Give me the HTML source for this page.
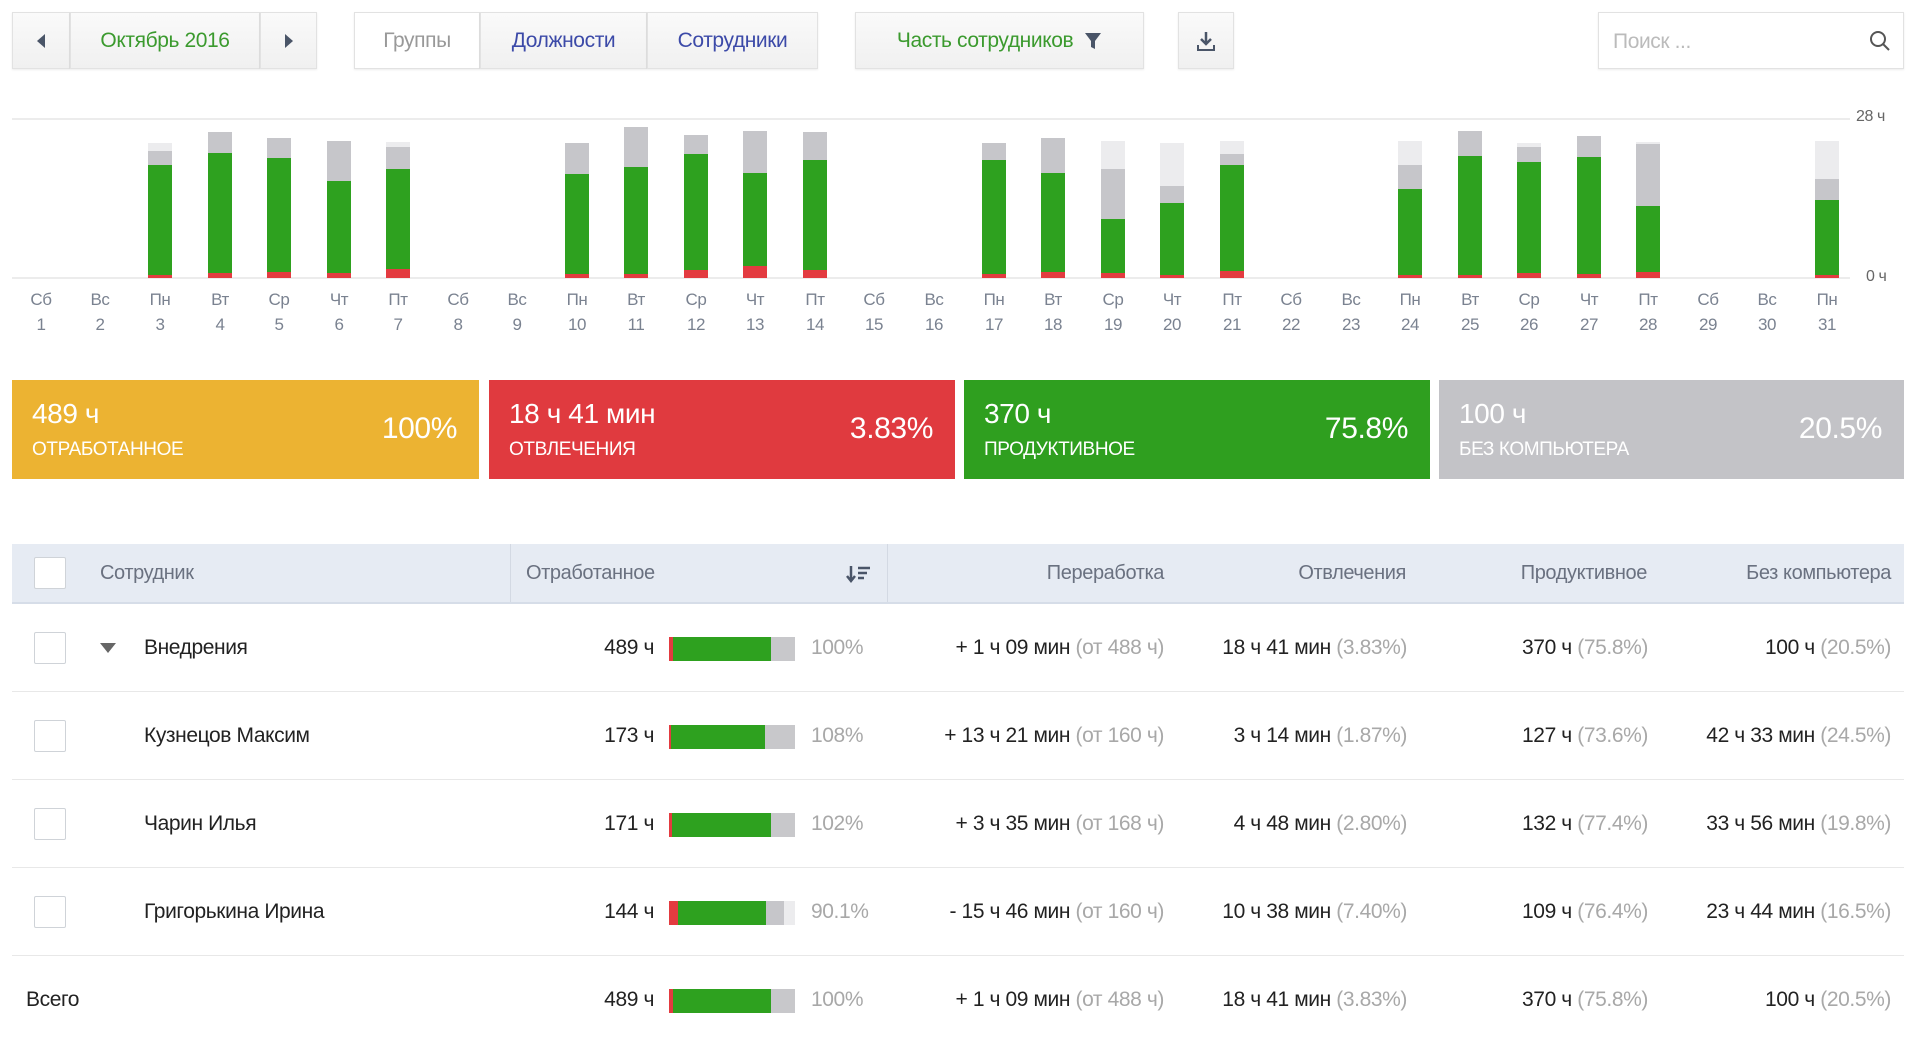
<!DOCTYPE html>
<html><head><meta charset="utf-8"><style>
*{box-sizing:border-box;margin:0;padding:0}
body{width:1920px;height:1034px;background:#fff;font-family:"Liberation Sans",sans-serif;color:#333;position:relative;overflow:hidden;letter-spacing:-0.4px}
.a{position:absolute}
.btn{position:absolute;top:12px;height:57px;background:linear-gradient(#fafafa,#f0f0f0);border:1px solid #e2e2e2;box-shadow:0 1px 2px rgba(0,0,0,.08);display:flex;align-items:center;justify-content:center;font-size:21px}
.bar{position:absolute;width:24px;bottom:756px}
.bar div{position:absolute;left:0;right:0;bottom:0}
.lt{background:#ececee}.gr{background:#c6c6ca}.gn{background:#2ea11f}.rd{background:#e33b40}
.dl{position:absolute;width:50px;text-align:center;font-size:17px;color:#7a8290;line-height:25px}
.card{position:absolute;top:380px;height:99px;color:#fff}
.card .v{position:absolute;left:20px;top:18px;font-size:28px}
.card .t{position:absolute;left:20px;top:59px;font-size:19px}
.card .p{position:absolute;right:22px;top:32px;font-size:30px}
.hd{position:absolute;top:544px;left:12px;width:1892px;height:60px;background:#e6ebf3;border-bottom:2px solid #d6dde8;font-size:20px;color:#6a7180}
.hd span{position:absolute;top:18px}
.cb{position:absolute;width:32px;height:32px;border:1px solid #cfd3d8;background:#fff;border-radius:2px}
.row{position:absolute;left:12px;width:1892px;height:88px;border-bottom:1px solid #e8e8e8;font-size:21px;color:#222}
.row span{position:absolute;top:32px;white-space:nowrap}
.g{color:#a8a8a8}
.pb{position:absolute;left:657px;top:33px;width:126px;height:24px;background:#c8c8cb}
.pb i{position:absolute;top:0;bottom:0;left:0}
</style></head><body>

<div class="btn" style="left:12px;width:58px;color:#555"><svg width="12" height="16"><path d="M10 1L2 8l8 7z" fill="#4a5568"/></svg></div>
<div class="btn" style="left:70px;width:190px;color:#3b9a2e">Октябрь 2016</div>
<div class="btn" style="left:260px;width:57px"><svg width="12" height="16"><path d="M2 1l8 7-8 7z" fill="#4a5568"/></svg></div>

<div class="btn" style="left:354px;width:126px;background:#fff;color:#999">Группы</div>
<div class="btn" style="left:480px;width:167px;color:#3c4aa8">Должности</div>
<div class="btn" style="left:647px;width:171px;color:#3c4aa8">Сотрудники</div>

<div class="btn" style="left:855px;width:289px;color:#3b9a2e">Часть сотрудников&nbsp;&nbsp;<svg width="18" height="18"><path d="M1 1h16l-6 8v8l-4-2V9z" fill="#4a5568"/></svg></div>
<div class="btn" style="left:1178px;width:56px"><svg width="20" height="22"><path d="M10 2v11M5 9l5 5 5-5" stroke="#4a5568" stroke-width="2.5" fill="none"/><path d="M2 15v5h16v-5" stroke="#4a5568" stroke-width="2" fill="none"/></svg></div>

<div class="a" style="left:1598px;top:12px;width:306px;height:57px;border:1px solid #e2e2e2;box-shadow:0 1px 2px rgba(0,0,0,.08);font-size:21px;color:#bbb;padding:17px 14px">Поиск ...
<svg class="a" style="right:12px;top:17px" width="22" height="22"><circle cx="9" cy="9" r="7" stroke="#555" stroke-width="2" fill="none"/><path d="M14 14l6 6" stroke="#555" stroke-width="2"/></svg></div>

<div class="a" style="left:12px;top:118px;width:1838px;height:2px;background:#ececec"></div>
<div class="a" style="left:12px;top:277px;width:1838px;height:2px;background:#ececec"></div>
<div class="a" style="left:1856px;top:108px;font-size:16px;color:#666">28 ч</div>
<div class="a" style="left:1866px;top:268px;font-size:16px;color:#666">0 ч</div>

<!-- bars -->
<div class="bar" style="left:148px"><div class="lt" style="height:135px"></div><div class="gr" style="height:127px"></div><div class="gn" style="height:113px"></div><div class="rd" style="height:3px"></div></div>
<div class="bar" style="left:208px"><div class="gr" style="height:146px"></div><div class="gn" style="height:125px"></div><div class="rd" style="height:5px"></div></div>
<div class="bar" style="left:267px"><div class="gr" style="height:140px"></div><div class="gn" style="height:120px"></div><div class="rd" style="height:6px"></div></div>
<div class="bar" style="left:327px"><div class="gr" style="height:137px"></div><div class="gn" style="height:97px"></div><div class="rd" style="height:5px"></div></div>
<div class="bar" style="left:386px"><div class="lt" style="height:136px"></div><div class="gr" style="height:131px"></div><div class="gn" style="height:109px"></div><div class="rd" style="height:9px"></div></div>
<div class="bar" style="left:565px"><div class="gr" style="height:135px"></div><div class="gn" style="height:104px"></div><div class="rd" style="height:4px"></div></div>
<div class="bar" style="left:624px"><div class="gr" style="height:151px"></div><div class="gn" style="height:111px"></div><div class="rd" style="height:4px"></div></div>
<div class="bar" style="left:684px"><div class="gr" style="height:143px"></div><div class="gn" style="height:124px"></div><div class="rd" style="height:8px"></div></div>
<div class="bar" style="left:743px"><div class="gr" style="height:147px"></div><div class="gn" style="height:105px"></div><div class="rd" style="height:12px"></div></div>
<div class="bar" style="left:803px"><div class="gr" style="height:146px"></div><div class="gn" style="height:118px"></div><div class="rd" style="height:8px"></div></div>
<div class="bar" style="left:982px"><div class="gr" style="height:135px"></div><div class="gn" style="height:118px"></div><div class="rd" style="height:4px"></div></div>
<div class="bar" style="left:1041px"><div class="gr" style="height:140px"></div><div class="gn" style="height:105px"></div><div class="rd" style="height:6px"></div></div>
<div class="bar" style="left:1101px"><div class="lt" style="height:137px"></div><div class="gr" style="height:109px"></div><div class="gn" style="height:59px"></div><div class="rd" style="height:5px"></div></div>
<div class="bar" style="left:1160px"><div class="lt" style="height:135px"></div><div class="gr" style="height:92px"></div><div class="gn" style="height:75px"></div><div class="rd" style="height:3px"></div></div>
<div class="bar" style="left:1220px"><div class="lt" style="height:137px"></div><div class="gr" style="height:124px"></div><div class="gn" style="height:113px"></div><div class="rd" style="height:7px"></div></div>
<div class="bar" style="left:1398px"><div class="lt" style="height:137px"></div><div class="gr" style="height:113px"></div><div class="gn" style="height:89px"></div><div class="rd" style="height:3px"></div></div>
<div class="bar" style="left:1458px"><div class="gr" style="height:147px"></div><div class="gn" style="height:122px"></div><div class="rd" style="height:3px"></div></div>
<div class="bar" style="left:1517px"><div class="lt" style="height:135px"></div><div class="gr" style="height:131px"></div><div class="gn" style="height:116px"></div><div class="rd" style="height:5px"></div></div>
<div class="bar" style="left:1577px"><div class="gr" style="height:142px"></div><div class="gn" style="height:121px"></div><div class="rd" style="height:4px"></div></div>
<div class="bar" style="left:1636px"><div class="lt" style="height:136px"></div><div class="gr" style="height:134px"></div><div class="gn" style="height:72px"></div><div class="rd" style="height:6px"></div></div>
<div class="bar" style="left:1815px"><div class="lt" style="height:137px"></div><div class="gr" style="height:99px"></div><div class="gn" style="height:78px"></div><div class="rd" style="height:3px"></div></div>

<!-- day labels -->
<div class="dl" style="left:16px;top:287px">Сб<br>1</div>
<div class="dl" style="left:75px;top:287px">Вс<br>2</div>
<div class="dl" style="left:135px;top:287px">Пн<br>3</div>
<div class="dl" style="left:195px;top:287px">Вт<br>4</div>
<div class="dl" style="left:254px;top:287px">Ср<br>5</div>
<div class="dl" style="left:314px;top:287px">Чт<br>6</div>
<div class="dl" style="left:373px;top:287px">Пт<br>7</div>
<div class="dl" style="left:433px;top:287px">Сб<br>8</div>
<div class="dl" style="left:492px;top:287px">Вс<br>9</div>
<div class="dl" style="left:552px;top:287px">Пн<br>10</div>
<div class="dl" style="left:611px;top:287px">Вт<br>11</div>
<div class="dl" style="left:671px;top:287px">Ср<br>12</div>
<div class="dl" style="left:730px;top:287px">Чт<br>13</div>
<div class="dl" style="left:790px;top:287px">Пт<br>14</div>
<div class="dl" style="left:849px;top:287px">Сб<br>15</div>
<div class="dl" style="left:909px;top:287px">Вс<br>16</div>
<div class="dl" style="left:969px;top:287px">Пн<br>17</div>
<div class="dl" style="left:1028px;top:287px">Вт<br>18</div>
<div class="dl" style="left:1088px;top:287px">Ср<br>19</div>
<div class="dl" style="left:1147px;top:287px">Чт<br>20</div>
<div class="dl" style="left:1207px;top:287px">Пт<br>21</div>
<div class="dl" style="left:1266px;top:287px">Сб<br>22</div>
<div class="dl" style="left:1326px;top:287px">Вс<br>23</div>
<div class="dl" style="left:1385px;top:287px">Пн<br>24</div>
<div class="dl" style="left:1445px;top:287px">Вт<br>25</div>
<div class="dl" style="left:1504px;top:287px">Ср<br>26</div>
<div class="dl" style="left:1564px;top:287px">Чт<br>27</div>
<div class="dl" style="left:1623px;top:287px">Пт<br>28</div>
<div class="dl" style="left:1683px;top:287px">Сб<br>29</div>
<div class="dl" style="left:1742px;top:287px">Вс<br>30</div>
<div class="dl" style="left:1802px;top:287px">Пн<br>31</div>

<!-- cards -->
<div class="card" style="left:12px;width:467px;background:#ecb332"><div class="v">489 ч</div><div class="t">ОТРАБОТАННОЕ</div><div class="p">100%</div></div>
<div class="card" style="left:489px;width:466px;background:#e03a3f"><div class="v">18 ч 41 мин</div><div class="t">ОТВЛЕЧЕНИЯ</div><div class="p">3.83%</div></div>
<div class="card" style="left:964px;width:466px;background:#2f9f1f"><div class="v">370 ч</div><div class="t">ПРОДУКТИВНОЕ</div><div class="p">75.8%</div></div>
<div class="card" style="left:1439px;width:465px;background:#c3c3c7"><div class="v">100 ч</div><div class="t">БЕЗ КОМПЬЮТЕРА</div><div class="p">20.5%</div></div>

<!-- header -->
<div class="hd">
<div class="cb" style="left:22px;top:13px"></div>
<span style="left:88px">Сотрудник</span>
<div class="a" style="left:498px;top:0;width:1px;height:58px;background:#d3d9e3"></div>
<span style="left:514px">Отработанное</span>
<svg class="a" style="left:834px;top:20px" width="26" height="20"><path d="M5 2v14M1 12l4 5 4-5" stroke="#4a5568" stroke-width="2.5" fill="none"/><path d="M12 4h12M12 9h9M12 14h6" stroke="#4a5568" stroke-width="2.5"/></svg>
<div class="a" style="left:875px;top:0;width:1px;height:58px;background:#d3d9e3"></div>
<span style="right:740px">Переработка</span>
<span style="right:498px">Отвлечения</span>
<span style="right:257px">Продуктивное</span>
<span style="right:13px">Без компьютера</span>
</div>

<!-- rows -->
<div class="row" style="top:604px">
<div class="cb" style="left:22px;top:28px"></div>
<svg class="a" style="left:87px;top:38px" width="18" height="12"><path d="M1 1h16l-8 10z" fill="#666"/></svg>
<span style="left:132px">Внедрения</span>
<span style="right:1250px">489 ч</span>
<div class="pb"><i class="rd" style="width:4px"></i><i class="gn" style="left:4px;width:98px"></i></div>
<span class="g" style="left:799px">100%</span>
<span style="right:740px">+ 1 ч 09 мин <b class="g" style="font-weight:normal">(от 488 ч)</b></span>
<span style="right:497px">18 ч 41 мин <b class="g" style="font-weight:normal">(3.83%)</b></span>
<span style="right:256px">370 ч <b class="g" style="font-weight:normal">(75.8%)</b></span>
<span style="right:13px">100 ч <b class="g" style="font-weight:normal">(20.5%)</b></span>
</div>
<div class="row" style="top:692px">
<div class="cb" style="left:22px;top:28px"></div>
<span style="left:132px">Кузнецов Максим</span>
<span style="right:1250px">173 ч</span>
<div class="pb"><i class="rd" style="width:2px"></i><i class="gn" style="left:2px;width:94px"></i></div>
<span class="g" style="left:799px">108%</span>
<span style="right:740px">+ 13 ч 21 мин <b class="g" style="font-weight:normal">(от 160 ч)</b></span>
<span style="right:497px">3 ч 14 мин <b class="g" style="font-weight:normal">(1.87%)</b></span>
<span style="right:256px">127 ч <b class="g" style="font-weight:normal">(73.6%)</b></span>
<span style="right:13px">42 ч 33 мин <b class="g" style="font-weight:normal">(24.5%)</b></span>
</div>
<div class="row" style="top:780px">
<div class="cb" style="left:22px;top:28px"></div>
<span style="left:132px">Чарин Илья</span>
<span style="right:1250px">171 ч</span>
<div class="pb"><i class="rd" style="width:3px"></i><i class="gn" style="left:3px;width:99px"></i></div>
<span class="g" style="left:799px">102%</span>
<span style="right:740px">+ 3 ч 35 мин <b class="g" style="font-weight:normal">(от 168 ч)</b></span>
<span style="right:497px">4 ч 48 мин <b class="g" style="font-weight:normal">(2.80%)</b></span>
<span style="right:256px">132 ч <b class="g" style="font-weight:normal">(77.4%)</b></span>
<span style="right:13px">33 ч 56 мин <b class="g" style="font-weight:normal">(19.8%)</b></span>
</div>
<div class="row" style="top:868px">
<div class="cb" style="left:22px;top:28px"></div>
<span style="left:132px">Григорькина Ирина</span>
<span style="right:1250px">144 ч</span>
<div class="pb" style="background:#ececee"><i class="gr" style="width:115px"></i><i class="rd" style="width:9px"></i><i class="gn" style="left:9px;width:88px"></i></div>
<span class="g" style="left:799px">90.1%</span>
<span style="right:740px">- 15 ч 46 мин <b class="g" style="font-weight:normal">(от 160 ч)</b></span>
<span style="right:497px">10 ч 38 мин <b class="g" style="font-weight:normal">(7.40%)</b></span>
<span style="right:256px">109 ч <b class="g" style="font-weight:normal">(76.4%)</b></span>
<span style="right:13px">23 ч 44 мин <b class="g" style="font-weight:normal">(16.5%)</b></span>
</div>
<div class="row" style="top:956px;border-bottom:none">
<span style="left:14px">Всего</span>
<span style="right:1250px">489 ч</span>
<div class="pb"><i class="rd" style="width:4px"></i><i class="gn" style="left:4px;width:98px"></i></div>
<span class="g" style="left:799px">100%</span>
<span style="right:740px">+ 1 ч 09 мин <b class="g" style="font-weight:normal">(от 488 ч)</b></span>
<span style="right:497px">18 ч 41 мин <b class="g" style="font-weight:normal">(3.83%)</b></span>
<span style="right:256px">370 ч <b class="g" style="font-weight:normal">(75.8%)</b></span>
<span style="right:13px">100 ч <b class="g" style="font-weight:normal">(20.5%)</b></span>
</div>
</body></html>
